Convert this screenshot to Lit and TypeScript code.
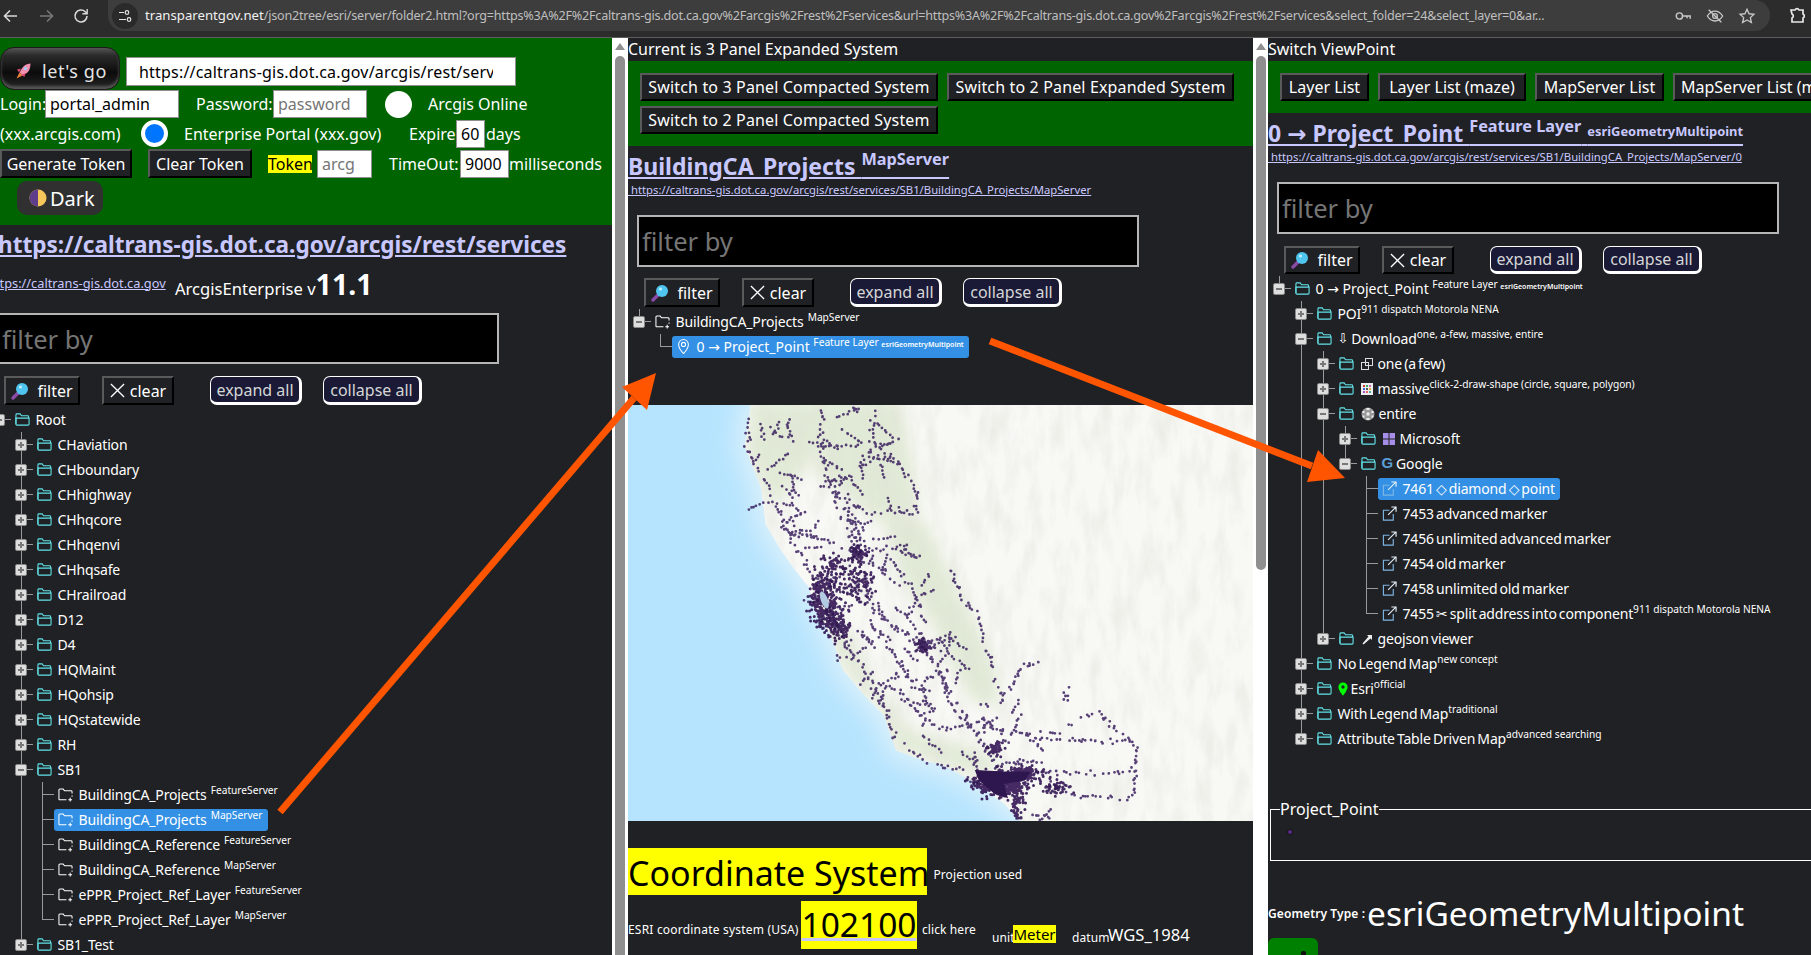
import { LitElement, html, css, svg, nothing } from "lit";
import { customElement } from "lit/decorators.js";

type N = { label: string; sup?: string; sup2?: string; pre?: string; kids?: N[]; closed?: boolean; icon?: string; sel?: boolean; wide?: boolean };

const folderIcon = svg`<svg class="ic" viewBox="0 0 16 16" fill="none" stroke="#62e4ea" stroke-width="1.15"><path d="M1 13V3a1 1 0 0 1 1-1h3.5l1.5 2h6.5a1 1 0 0 1 1 1v1.5"/><path d="M1 6.5h14V13a1 1 0 0 1-1 1H2a1 1 0 0 1-1-1z"/></svg>`;
const serverIcon = svg`<svg class="ic" viewBox="0 0 16 16" fill="none" stroke="#fff" stroke-width="1.1"><path d="M1 13.5V3.2a1 1 0 0 1 1-1h3.5L7 4h7a1 1 0 0 1 1 1v2M15 9v1.5M1 13.5h8"/><path d="M13 11.5v4M11 13.5h4"/></svg>`;
const pinIcon = svg`<svg class="ic" viewBox="0 0 16 16" fill="none" stroke="#fff" stroke-width="1.1"><path d="M8 15.5S13.2 10 13.2 5.8a5.2 5.2 0 0 0-10.4 0C2.8 10 8 15.5 8 15.5z"/><circle cx="8" cy="5.8" r="2.2"/></svg>`;
const extIcon = svg`<svg class="ic" viewBox="0 0 16 16" fill="none" stroke-width="1.2"><path stroke="#7db6e4" d="M12 8.5V15H1.5V4.5H8"/><path stroke="#e4f0fa" d="M6.5 9.5L15 1M10 1h5v5"/></svg>`;
const oneIcon = svg`<svg class="pi" viewBox="0 0 12 12" fill="none" stroke="#ddd"><rect x="4.5" y=".5" width="7" height="7"/><rect x=".5" y="4.5" width="7" height="7"/></svg>`;
const massiveIcon = svg`<svg class="pi" viewBox="0 0 12 12"><rect width="12" height="12" fill="#eee"/><g><rect x="2" y="2" width="2" height="2" fill="#c33"/><rect x="5" y="2" width="2" height="2" fill="#3a6"/><rect x="8" y="2" width="2" height="2" fill="#c6a"/><rect x="2" y="5" width="2" height="2" fill="#36c"/><rect x="5" y="5" width="2" height="2" fill="#555"/><rect x="8" y="5" width="2" height="2" fill="#da3"/><rect x="2" y="8" width="2" height="2" fill="#a5c"/><rect x="5" y="8" width="2" height="2" fill="#e66"/><rect x="8" y="8" width="2" height="2" fill="#5aa"/></g></svg>`;
const entireIcon = svg`<svg class="pi wide" viewBox="0 0 14 14"><circle cx="7" cy="7" r="6.5" fill="#999"/><g fill="#eee"><rect x="5.5" y="1" width="3" height="2"/><rect x="1.5" y="4" width="2" height="2"/><rect x="10.5" y="4" width="2" height="2"/><rect x="5.5" y="5.5" width="3" height="3"/><rect x="1.5" y="8.5" width="2" height="2"/><rect x="10.5" y="8.5" width="2" height="2"/><rect x="5.5" y="11" width="3" height="2"/></g></svg>`;
const msIcon = svg`<svg class="pi" viewBox="0 0 12 12" fill="#a68ee8"><rect width="5.5" height="5.5"/><rect x="6.5" width="5.5" height="5.5"/><rect y="6.5" width="5.5" height="5.5"/><rect x="6.5" y="6.5" width="5.5" height="5.5"/></svg>`;
const esriIcon = svg`<svg class="pin" viewBox="0 0 12 16"><path fill-rule="evenodd" fill="#0f0" d="M6 16S11.5 9.8 11.5 5.6a5.5 5.5 0 0 0-11 0C.5 9.8 6 16 6 16zM6 3.6a2 2 0 1 1 0 4 2 2 0 0 1 0-4z"/></svg>`;
const geoIcon = svg`<svg class="pi" viewBox="0 0 12 12" fill="#eee"><path d="M1.5 10.5l6-7-1.5-1.5h5v5L9.5 5.5l-7 6z"/></svg>`;
const prefix: Record<string, any> = {
  one: oneIcon, massive: massiveIcon, entire: entireIcon, ms: msIcon, esri: esriIcon, geo: geoIcon,
  g: html`<span class="gg">G</span>`, down: html`<span class="dn">⇩</span>`,
};
const loupe = svg`<svg class="loupe" viewBox="0 0 18 18"><path d="M2 16l5-5" stroke="#8a4aa8" stroke-width="3.4" stroke-linecap="round"/><circle cx="11" cy="7" r="6" fill="#4fc4ee"/><circle cx="9.5" cy="5" r="1.6" fill="#bdeeff"/></svg>`;
const xmark = svg`<svg class="xm" viewBox="0 0 16 16" stroke="#fff" stroke-width="1.4"><path d="M1 1l14 14M15 1L1 15"/></svg>`;

const sb = (label: string, sup: string, sel = false): N => ({ label, sup, icon: "server", sel });
const closed = (label: string): N => ({ label, closed: true, kids: [] });
const tree1: N[] = [{ label: "Root", kids: [
  "CHaviation", "CHboundary", "CHhighway", "CHhqcore", "CHhqenvi", "CHhqsafe", "CHrailroad", "D12", "D4", "HQMaint", "HQohsip", "HQstatewide", "RH",
].map(closed).concat([
  { label: "SB1", kids: [
    sb("BuildingCA_Projects ", "FeatureServer"), sb("BuildingCA_Projects ", "MapServer", true),
    sb("BuildingCA_Reference ", "FeatureServer"), sb("BuildingCA_Reference ", "MapServer"),
    sb("ePPR_Project_Ref_Layer ", "FeatureServer"), sb("ePPR_Project_Ref_Layer ", "MapServer"),
  ] },
  closed("SB1_Test"),
]) }];
const tree2: N[] = [{ label: "BuildingCA_Projects ", sup: "MapServer", icon: "server", kids: [
  { label: "0 → Project_Point ", sup: "Feature Layer ", sup2: "esriGeometryMultipoint", icon: "pin", sel: true, wide: true },
] }];
const ext = (label: string, sel = false, sup?: string): N => ({ label, icon: "ext", sel, sup });
const tree3: N[] = [{ label: "0 → Project_Point ", sup: "Feature Layer ", sup2: "esriGeometryMultipoint", wide: true, kids: [
  { label: "POI", sup: "911 dispatch Motorola NENA", closed: true, kids: [] },
  { label: "Download", pre: "down", sup: "one, a-few, massive, entire", kids: [
    { label: "one (a few)", pre: "one", closed: true, kids: [] },
    { label: "massive", pre: "massive", sup: "click-2-draw-shape (circle, square, polygon)", closed: true, kids: [] },
    { label: "entire", pre: "entire", kids: [
      { label: "Microsoft", pre: "ms", closed: true, kids: [] },
      { label: "Google", pre: "g", kids: [
        ext("7461 ◇ diamond ◇ point", true), ext("7453 advanced marker"), ext("7456 unlimited advanced marker"),
        ext("7454 old marker"), ext("7458 unlimited old marker"), ext("7455 ✂ split address into component", false, "911 dispatch Motorola NENA"),
      ] },
    ] },
    { label: "geojson viewer", pre: "geo", closed: true, kids: [] },
  ] },
  { label: "No Legend Map", sup: "new concept", closed: true, kids: [] },
  { label: "Esri", pre: "esri", sup: "official", closed: true, kids: [] },
  { label: "With Legend Map", sup: "traditional", closed: true, kids: [] },
  { label: "Attribute Table Driven Map", sup: "advanced searching", closed: true, kids: [] },
] }];

/* ---- map: coordinates were read off the reference, then mapped to the map's own box ---- */
const mx = (x: number) => x / 2.412 - 18;
const my = (y: number) => y / 2.825 - 5;
const pts = (a: number[][]) => a.map(([x, y]) => `${mx(x).toFixed(1)},${my(y).toFixed(1)}`).join(" ");
const coast = [[340, 0], [335, 60], [325, 130], [345, 190], [365, 250], [375, 350], [410, 420], [440, 470], [480, 530], [490, 580], [530, 660], [550, 720], [560, 760], [610, 830], [660, 890], [690, 990], [760, 1020], [800, 1030], [880, 1080], [950, 1140], [990, 1190]];
const land = [...coast, [1560, 1190], [1560, 0]];
const east = [[0, 640], [350, 700], [500, 790], [700, 860], [850, 950], [1000, 1070], [1190, 1110]];
const lerpAt = (t: number[][], y: number, yi: number, xi: number) => {
  for (let i = 0; i + 1 < t.length; i++) {
    if (y >= t[i][yi] && y <= t[i + 1][yi]) {
      const k = (y - t[i][yi]) / (t[i + 1][yi] - t[i][yi] || 1);
      return t[i][xi] + (t[i + 1][xi] - t[i][xi]) * k;
    }
  }
  return t[t.length - 1][xi];
};
const greens = [
  [[340, 0], [700, 0], [735, 200], [745, 320], [640, 340], [560, 260], [490, 200], [520, 120], [480, 180], [400, 300], [370, 260], [325, 130]],
  [[650, 300], [760, 340], [820, 490], [880, 620], [930, 760], [940, 870], [870, 850], [790, 660], [700, 500]],
  [[470, 530], [560, 640], [640, 800], [720, 930], [900, 990], [960, 1060], [850, 1050], [760, 1015], [690, 985], [650, 880], [560, 750], [500, 600]],
];
const roads: number[][][] = [
  [[510, 20], [510, 120], [520, 210], [540, 260], [580, 330], [600, 430], [620, 540], [680, 640], [750, 690], [820, 820], [880, 940], [920, 1010], [930, 1060]],
  [[335, 60], [330, 140], [370, 220], [400, 300], [430, 380], [470, 450], [500, 540], [540, 620], [570, 690], [610, 760], [660, 860], [690, 960], [760, 1020], [860, 1050]],
  [[640, 30], [630, 120], [690, 170], [740, 260], [740, 320], [640, 320], [580, 400]],
  [[380, 60], [400, 100], [500, 130], [600, 130], [680, 170]],
  [[600, 430], [720, 410]], [[600, 430], [480, 380], [420, 340]], [[600, 430], [660, 480], [700, 530]], [[600, 430], [520, 530]],
  [[530, 260], [570, 270], [580, 400]],
  [[610, 540], [640, 600], [700, 650], [760, 700], [800, 780], [830, 880], [870, 920], [915, 1000]],
  [[820, 480], [850, 560], [890, 610], [900, 680], [935, 800], [945, 850], [1000, 750], [1040, 740]],
  [[1100, 800], [1100, 860]],
  [[870, 920], [980, 940], [1080, 940], [1170, 880], [1240, 950], [1270, 980], [1265, 1050], [1265, 1130]],
  [[1020, 955], [1200, 965], [1260, 960]], [[1020, 1050], [1130, 1055], [1260, 1050]], [[1060, 1080], [1110, 1115], [1260, 1125]],
  [[550, 720], [580, 670]], [[700, 830], [760, 900], [800, 930], [870, 920]], [[680, 770], [740, 800], [830, 760]], [[640, 650], [720, 770]],
  [[680, 450], [740, 560], [760, 640]], [[740, 560], [720, 620], [800, 720]],
];
const clusters = [
  [515, 570, 24, 52, 300], [548, 635, 22, 28, 110], [600, 432, 14, 14, 60], [755, 695, 12, 14, 50], [600, 520, 28, 42, 90], [540, 470, 30, 30, 60],
  [945, 1085, 44, 28, 380], [1000, 1055, 28, 16, 110], [930, 985, 14, 14, 50], [985, 1150, 14, 28, 50], [1075, 1095, 26, 18, 45],
];
let seed = 7;
const rnd = () => { seed = (seed * 16807) % 2147483647; return seed / 2147483647; };
const gauss = () => (rnd() + rnd() + rnd() + rnd() - 2) * 1.2;
const buildDots = () => {
  let small = "", big = "";
  const dot = (x: number, y: number) => `M${mx(x).toFixed(1)} ${my(y).toFixed(1)}h0`;
  for (const r of roads) {
    for (let i = 0; i + 1 < r.length; i++) {
      const [ax, ay] = r[i], [bx, by] = r[i + 1];
      const n = Math.ceil(Math.hypot(bx - ax, by - ay) / 8);
      for (let k = 0; k < n; k++) {
        if (rnd() < 0.22) continue;
        const t = k / n;
        small += dot(ax + (bx - ax) * t + gauss() * 5, ay + (by - ay) * t + gauss() * 5);
      }
    }
  }
  /* the mesh of local roads between the highways */
  for (let s = 0; s < 110; s++) {
    const y = rnd() * 1180;
    const w0 = lerpAt(coast, y, 1, 0), w1 = lerpAt(east, y, 0, 1);
    let x = w0 + 8 + rnd() * Math.max(10, w1 - w0 - 8);
    let yy = y;
    const ang = rnd() * 6.28, len = 3 + Math.floor(rnd() * 6);
    for (let k = 0; k < len; k++) {
      x += Math.cos(ang) * 9; yy += Math.sin(ang) * 9;
      small += dot(x + gauss() * 3, yy + gauss() * 3);
    }
  }
  for (const [cx, cy, sx, sy, n] of clusters) {
    for (let k = 0; k < n; k++) big += dot(cx + gauss() * sx, cy + gauss() * sy);
  }
  return { small, big };
};
const dots = buildDots();

const mapSvg = svg`<svg class="map" viewBox="0 0 625 416" preserveAspectRatio="none">
  <defs>
    <filter id="b6"><feGaussianBlur stdDeviation="8"/></filter>
    <filter id="b14"><feGaussianBlur stdDeviation="14"/></filter>
    <filter id="soft"><feGaussianBlur stdDeviation=".45"/></filter>
    <filter id="hill" x="0" y="0" width="100%" height="100%">
      <feTurbulence type="fractalNoise" baseFrequency="0.07 0.022" numOctaves="4" seed="11"/>
      <feColorMatrix type="matrix" values="0 0 0 0 .74  0 0 0 0 .76  0 0 0 0 .68  1.9 0 0 0 -.8"/>
    </filter>
    <clipPath id="landclip"><polygon points=${pts(land)}/></clipPath>
  </defs>
  <rect width="625" height="416" fill="#b6e4fe"/>
  <polygon points=${pts(land)} fill="#dff2fb" stroke="#dff2fb" stroke-width="16" filter="url(#b14)"/>
  <ellipse cx="603" cy="12" rx="22" ry="22" fill="#c4e8f8"/>
  <g clip-path="url(#landclip)">
    <rect width="625" height="416" fill="#f8f8f5"/>
    ${greens.map((g) => svg`<polygon points=${pts(g)} fill="#e1ead6" filter="url(#b6)"/>`)}
    <rect x="105" width="520" height="416" filter="url(#hill)" opacity=".55"/>
  </g>
  <g filter="url(#soft)">
    <path d=${dots.small} stroke="#33185a" stroke-opacity=".82" stroke-width="2.8" stroke-linecap="round" fill="none"/>
    <path d=${dots.big} stroke="#2e1350" stroke-opacity=".88" stroke-width="3" stroke-linecap="round" fill="none"/>
    <polygon points=${pts([[880, 1045], [960, 1050], [1015, 1050], [1000, 1075], [950, 1085], [960, 1125], [925, 1110], [890, 1075]])} fill="#2e1350"/>
  </g>
  <ellipse cx=${mx(517)} cy=${my(565)} rx="3.5" ry="9" fill="#c7e9fa" opacity=".85" transform="rotate(-20 ${mx(517)} ${my(565)})"/>
</svg>`;

@customElement("app-root")
export class AppRoot extends LitElement {
  static styles = css`
    :host { display: block; position: relative; width: 1811px; height: 955px; overflow: hidden; background: #202124; color: #fff; font-family: "Noto Sans", "DejaVu Sans", sans-serif; font-size: 16px; }
    * { box-sizing: border-box; }

    /* browser chrome */
    .chrome { height: 38px; background: #2c2c2c; border-bottom: 1px solid #5d5d5d; display: flex; align-items: flex-start; position: relative; }
    .navs { width: 108px; height: 31px; flex: none; display: flex; align-items: center; padding-left: 1px; gap: 15px; }
    .navs svg { width: 20px; height: 20px; flex: none; }
    .omni { width: 1662px; height: 31px; background: #3d3d3d; border-radius: 0 16px 16px 16px; display: flex; align-items: center; flex: none; position: relative; }
    .tune { width: 26px; height: 26px; margin-left: 4px; border-radius: 50%; background: #2a2a2a; display: flex; align-items: center; justify-content: center; flex: none; }
    .tune svg { width: 14px; height: 14px; }
    .url { margin-left: 7px; width: 1515px; font: 12.6px/31px "Noto Sans", sans-serif; color: #bfbfbf; white-space: nowrap; overflow: hidden; flex: none; letter-spacing: -.23px; }
    .url b { font-weight: 400; color: #f1f1f1; font-size: 13.2px; letter-spacing: 0; }
    .omni svg.o { width: 18px; height: 18px; flex: none; margin-left: 14px; }
    .ext-btn { width: 20px; height: 20px; margin: 5px 0 0 17px; flex: none; }

    .main { display: flex; height: 917px; }
    .p1 { width: 612px; flex: none; overflow: hidden; }
    .p2 { width: 625px; flex: none; overflow: hidden; }
    .p3 { flex: 1; min-width: 0; overflow: hidden; white-space: nowrap; }
    .track { flex: none; background: #fff; display: flex; flex-direction: column; align-items: center; height: 100%; }
    .t1 { width: 16px; }
    .t2 { width: 15px; }
    .up { width: 0; height: 0; margin-top: 5px; border: 5px solid transparent; border-top: 0; border-bottom: 7px solid #8f8f8f; }
    .thumb { width: 10px; background: #8f8f8f; border-radius: 5px; margin-top: 6px; }
    .t1 .thumb { flex: 1; border-radius: 5px 5px 0 0; margin-bottom: -8px; }
    .t2 .thumb { height: 514px; }

    /* left green header */
    .green { background: #006400; }
    .hdr { height: 187px; padding-top: 9px; }
    .row { display: flex; align-items: center; white-space: nowrap; }
    .r1 { height: 43px; }
    .r2 { height: 28px; margin-top: 0; }
    .r3 { height: 29px; margin-top: 1px; }
    .r4 { height: 29px; margin-top: 1px; }
    .r5 { height: 34px; margin-top: 3px; padding-left: 17px; }
    .go { width: 120px; height: 43px; border-radius: 14px; border: 1px solid #1b1b1b; background: linear-gradient(#555 0, #2b2b2b 18%, #0b0b0b 60%, #262626 100%); color: #e4e4e4; font: 18px "Noto Sans", sans-serif; letter-spacing: .55px; display: flex; align-items: center; padding: 4px 0 0 13px; gap: 10px; box-shadow: inset 0 -3px 3px #555; flex: none; }
    .go svg { width: 18px; height: 18px; flex: none; }
    .field { height: 28px; border: 1px solid #8f8f8f; background: #fff; color: #000; font: 16px "Noto Sans", sans-serif; padding: 0 4px; outline: none; flex: none; margin: 0; }
    .field::placeholder { color: #757575; }
    .f-url { width: 390px; height: 29px; margin: 6px 0 0 6px; padding: 0 22px 0 12px; letter-spacing: .2px; }
    .f-login { width: 134px; }
    .f-pass { width: 94px; }
    .f-exp { width: 29px; }
    .f-tok { width: 55px; }
    .f-time { width: 49px; }
    .lb-login { width: 45px; }
    .lb-pass { width: 77px; margin-left: 17px; }
    .radio { width: 27px; height: 27px; border-radius: 50%; background: #fff; flex: none; }
    .rd1 { margin: 0 16px 0 18px; }
    .rd2 { margin: 0 16px 0 17px; border: 4px solid #fff; background: #0075ff; }
    .lb-x { width: 124px; }
    .lb-ent { width: 225px; }
    .lb-exp { width: 47px; }
    .lb-days { margin-left: 1px; }
    .btn { height: 29px; background: #202124; color: #fff; border: 2px solid; border-color: #5a5a5a #000 #000 #5a5a5a; font: 16px "Noto Sans", sans-serif; padding: 0 6px; display: inline-flex; align-items: center; justify-content: center; flex: none; white-space: nowrap; }
    .b-gen { width: 132px; }
    .b-clr { width: 104px; margin-left: 16px; }
    .tok { background: #ff0; color: #000; height: 18px; width: 44px; line-height: 18px; margin: 0 5px 0 16px; display: block; flex: none; text-align: center; }
    .lb-time { width: 71px; margin-left: 17px; }
    .dark { width: 86px; height: 34px; border-radius: 10px; background: #303030; display: flex; align-items: center; padding-left: 12px; gap: 3px; font-size: 20px; }
    .dark svg { width: 18px; height: 18px; }

    /* heading blocks */
    .h { color: #c8c8ff; text-decoration: underline; font-weight: 700; white-space: nowrap; display: block; }
    .h1 { font-size: 22.55px; height: 40px; line-height: 40px; margin-left: -2px; }
    .small { color: #c8c8ff; text-decoration: underline; font-size: 11.3px; white-space: nowrap; }
    .s1 { margin-left: -13px; width: 188px; flex: none; margin-top: -3px; font-size: 12.8px; }
    .ver { height: 38px; display: flex; align-items: center; }
    .arcgis { font-size: 16.6px; padding-top: 6px; white-space: nowrap; }
    .arcgis b { font-size: 28.5px; line-height: 20px; }
    .filter { display: block; height: 51px; background: #000; border: 2px solid #b5b5b5; color: #fff; font: 25.5px "Noto Sans", sans-serif; padding: 0 3px; outline: none; }
    .filter::placeholder { color: #757575; }
    .fl1 { width: 503px; margin: 10px 0 12px -4px; padding-left: 4px; }
    .fl2 { width: 502px; margin: 0 0 11px 9px; height: 52px; }
    .fl3 { width: 502px; margin: 0 0 12px 9px; height: 52px; }
    .tools { display: flex; align-items: center; height: 29px; white-space: nowrap; }
    .tb1 { padding-left: 4px; }
    .tb2 { padding-left: 16px; }
    .tb3 { padding-left: 16px; height: 28px; }
    .tools .btn { gap: 8px; height: 100%; }
    .b-f { width: 76px; }
    .b-c { width: 72px; gap: 5px !important; margin-left: 22px; }
    .pill { height: 100%; background: #1a1a36; color: #d6d6d6; border: 1px solid #fff; border-width: 1px 3px 3px 1px; border-radius: 7px; font: 16px "Noto Sans", sans-serif; display: inline-flex; align-items: center; justify-content: center; flex: none; padding: 0; }
    .p-e { width: 92px; margin-left: 36px; }
    .p-o { width: 99px; margin-left: 21px; }
    .loupe { width: 18px; height: 18px; flex: none; }
    .xm { width: 15px; height: 15px; flex: none; }

    .title { height: 23px; line-height: 23px; font-size: 16px; white-space: nowrap; }
    .sw { display: flex; flex-wrap: wrap; gap: 4px 9px; padding: 12px 12px; height: 85px; }
    .sw .btn { width: 298px; height: 28px; letter-spacing: .15px; }
    .sw .b2 { width: 287px; }
    .vp { height: 52px; padding: 12px; display: flex; gap: 9px; }
    .vp .btn { height: 28px; }
    .vp1 { width: 89px; }
    .vp2 { width: 148px; }
    .vp3 { width: 129px; }
    .vp4 { width: 160px; justify-content: flex-start !important; padding-left: 6px !important; }

    .h2 { font-size: 23px; height: 32px; line-height: 38px; display: inline-block; }
    .h2 sup { font-size: 16.3px; line-height: 0; vertical-align: 10px; }
    .h2 sub { font-size: 12.9px; line-height: 0; vertical-align: 6px; }
    .link2 { display: block; height: 16px; line-height: 16px; margin-top: 2px; }
    .p2 .head { height: 69px; padding-top: 1px; }
    .p3 .head { height: 69px; padding-top: 1px; }

    /* tree */
    ul { list-style: none; margin: 0; padding: 0 0 0 22px; }
    ul.root { padding-left: 5px; margin-top: 2px; }
    ul.root.lf { padding-left: 0; margin-left: -7px; }
    li { background: linear-gradient(#9a9a9a, #9a9a9a) no-repeat 5.5px 0 / 1px 100%; }
    li.last { background-size: 1px 12.5px; }
    li.leaf { background-position: 5px 0; }
    .n { height: 25px; display: flex; align-items: center; white-space: nowrap; font-size: 14px; word-spacing: -1.4px; letter-spacing: -.15px; }
    .tx.wd { word-spacing: 0; letter-spacing: 0; }
    .tx.srv sup { margin-left: 2px; }
    .tg { width: 12px; height: 12px; flex: none; border-radius: 2px; border: 1px solid #8a8a8a; background-color: #dedede; background-repeat: no-repeat; background-position: center, center; background-image: linear-gradient(#777, #777), linear-gradient(#777, #777); background-size: 6px 2px, 2px 6px; }
    .tg.open { background-size: 6px 2px, 0 0; }
    .dash { width: 6px; height: 1px; background: #9a9a9a; flex: none; margin-right: 3.5px; }
    .ic { width: 15px; height: 15px; flex: none; }
    .n > .ic { margin-right: 6px; }
    .pi { width: 12px; height: 12px; flex: none; margin: 0 5px 0 1px; }
    .pi.wide { width: 14px; height: 14px; margin-right: 4px; }
    .pin { width: 10px; height: 14px; flex: none; margin-right: 3px; }
    .gg { color: #5b9fd8; font-weight: 700; font-size: 15px; margin: -3px 3px 0 0; font-family: "Liberation Sans", sans-serif; }
    .dn { margin-right: 3px; font: 13px "DejaVu Sans", sans-serif; }
    .tx sup { font-size: 10.2px; line-height: 0; vertical-align: 6px; word-spacing: 0; letter-spacing: 0; }
    .tx sub { font-size: 7px; line-height: 0; vertical-align: 5px; font-weight: 600; word-spacing: 0; letter-spacing: 0; }
    .lconn { width: 11.5px; height: 1px; background: #9a9a9a; margin-left: 5px; flex: none; }
    .a { height: 22px; display: inline-flex; align-items: center; padding: 0 5px 0 4px; border-radius: 3px; gap: 6px; }
    .a.sel { background: #3390e4; }

    .mapbox { margin-top: 46px; }
    .map { display: block; width: 625px; height: 416px; }
    .cs { padding-top: 26px; white-space: nowrap; }
    .y { background: #ff0; color: #000; }
    .csr1 { display: flex; align-items: center; height: 48px; }
    .csr1 .y { font-size: 34px; line-height: 50px; height: 47px; display: block; width: 299px; }
    .csr1 .mini { padding-top: 7px; }
    .mini { font-size: 12px; letter-spacing: .1px; }
    .csr2 { display: flex; height: 48px; margin-top: 6px; }
    .m-esri { width: 173px; flex: none; letter-spacing: .2px; }
    .code { font-size: 33.5px; line-height: 47px; height: 48px; width: 116px; text-align: center; flex: none; }
    .code u { text-decoration-color: #c8c8ff; text-decoration-thickness: 3px; text-underline-offset: 1px; }
    .csr2 .mini { padding-top: 20px; }
    .ck { margin-left: 5px; width: 70px; flex: none; }
    .unit { margin-top: 28px; width: 21px; flex: none; padding-top: 0 !important; }
    .mtr { height: 18px; line-height: 18px; width: 43px; text-align: center; margin-top: 24px; flex: none; font-size: 15px; }
    .dat { margin: 28px 0 0 16px; width: 36px; flex: none; padding-top: 0 !important; }
    .wgs { margin-top: 22px; font-size: 16.6px; }

    .fs { margin: 50px 0 0 2px; border: 1px solid #fff; height: 60px; padding: 0; width: 620px; }
    .fs legend { margin-left: 9px; padding: 0; font-size: 16px; line-height: 16px; }
    .dot { display: block; width: 6px; height: 6px; border-radius: 50%; background: #5b2a8c; border: 1px solid #111; margin: 12px 0 0 16px; }
    .gt { display: flex; align-items: center; height: 50px; margin-top: 27px; white-space: nowrap; }
    .gt .mini { font-weight: 600; width: 99px; flex: none; font-size: 12px; }
    .gt .big { font-size: 33.5px; }
    .gbtn { width: 50px; height: 30px; background: #008000; border-radius: 6px 6px 0 0; padding: 13px 0 0 33px; }
    .gbtn span { display: block; width: 5px; height: 6px; background: #111; border-radius: 2px 2px 0 0; }

    .arrows { position: absolute; inset: 0; width: 1811px; height: 955px; pointer-events: none; }
  `;

  private row(n: N, last: boolean): unknown {
    const hasKids = !!n.kids;
    const isLeaf = !hasKids;
    const label = html`<span class="tx ${n.wide ? "wd" : ""} ${n.icon === "server" ? "srv" : ""}">${n.label}${n.sup ? html`<sup>${n.sup}</sup>` : nothing}${n.sup2 ? html`<sub>${n.sup2}</sub>` : nothing}</span>`;
    const ic = n.icon === "server" ? serverIcon : n.icon === "pin" ? pinIcon : n.icon === "ext" ? extIcon : null;
    return html`<li class="${last ? "last" : ""} ${isLeaf ? "leaf" : ""}">
      <div class="n">
        ${isLeaf
          ? html`<span class="lconn"></span><span class="a ${n.sel ? "sel" : ""}">${ic}${label}</span>`
          : html`<span class="tg ${n.closed ? "" : "open"}"></span><span class="dash"></span>${ic ?? folderIcon}${n.pre ? prefix[n.pre] : nothing}${label}`}
      </div>
      ${hasKids && !n.closed && n.kids!.length ? html`<ul>${n.kids!.map((k, i) => this.row(k, i === n.kids!.length - 1))}</ul>` : nothing}
    </li>`;
  }

  private tools(cls: string) {
    return html`<div class="tools ${cls}">
      <button class="btn b-f">${loupe}filter</button>
      <button class="btn b-c">${xmark}clear</button>
      <button class="pill p-e">expand all</button>
      <button class="pill p-o">collapse all</button>
    </div>`;
  }

  render() {
    return html`
      <div class="chrome">
        <div class="navs">
          <svg viewBox="0 0 20 20" fill="none" stroke="#d8d8d8" stroke-width="1.6"><path d="M16 10H4M9 4.5L3.5 10 9 15.5"/></svg>
          <svg viewBox="0 0 20 20" fill="none" stroke="#777" stroke-width="1.6"><path d="M4 10h12M11 4.5l5.5 5.5-5.5 5.5"/></svg>
          <svg viewBox="0 0 20 20" fill="none" stroke="#d8d8d8" stroke-width="1.6"><path d="M16 10a6 6 0 1 1-1.8-4.3L16 7.5"/><path d="M16.2 3v4.8h-4.8" stroke-width="1.4"/></svg>
        </div>
        <div class="omni">
          <span class="tune"><svg viewBox="0 0 14 14" fill="none" stroke="#e6e6e6" stroke-width="1.2"><path d="M1 3.5h5M1 10.5h7"/><circle cx="9" cy="3.5" r="1.8"/><circle cx="11" cy="10.5" r="1.8"/></svg></span>
          <span class="url"><b>transparentgov.net</b>/json2tree/esri/server/folder2.html?org=https%3A%2F%2Fcaltrans-gis.dot.ca.gov%2Farcgis%2Frest%2Fservices&amp;url=https%3A%2F%2Fcaltrans-gis.dot.ca.gov%2Farcgis%2Frest%2Fservices&amp;select_folder=24&amp;select_layer=0&amp;ar...</span>
          <svg class="o" viewBox="0 0 20 20" fill="none" stroke="#c8c8c8" stroke-width="1.6"><circle cx="6" cy="10" r="3.5"/><path d="M9.5 10H18v3M14.5 10v2.5"/></svg>
          <svg class="o" viewBox="0 0 20 20" fill="none" stroke="#c8c8c8" stroke-width="1.5"><path d="M1.5 10S5 4.5 10 4.5 18.5 10 18.5 10 15 15.5 10 15.5 1.5 10 1.5 10z"/><circle cx="10" cy="10" r="2.6"/><path d="M3 3l14 14"/></svg>
          <svg class="o" viewBox="0 0 20 20" fill="none" stroke="#c8c8c8" stroke-width="1.5"><path d="M10 2.5l2.3 5 5.4.6-4 3.7 1.1 5.4L10 14.4l-4.8 2.8 1.1-5.4-4-3.7 5.4-.6z"/></svg>
        </div>
        <svg class="ext-btn" viewBox="0 0 20 20" fill="none" stroke="#e8e8e8" stroke-width="1.7"><path d="M4 5h4a2.2 2.2 0 0 1 4 0h4v4a2.2 2.2 0 0 1 0 4v4H5v-4a2.2 2.2 0 0 0 0-4z"/></svg>
      </div>

      <div class="main">
        <section class="p1">
          <div class="green hdr">
            <div class="row r1">
              <div class="go">
                <svg viewBox="0 0 18 18"><path d="M16.5 1.5c-4 .3-7 2.2-9 5.5l-2 3.5 3 3 3.5-2c3.3-2 4.3-5.5 4.5-10z" fill="#f28fae"/><circle cx="11.5" cy="6.5" r="1.7" fill="#9fc8f0"/><path d="M5.5 10.5l-3 6 6-3z" fill="#f0813a"/><path d="M7 6.5L3 7.5l2 3zM11.5 11l-1 4-3-2z" fill="#d9486e"/></svg>
                <span>let's go</span>
              </div>
              <input class="field f-url" .value=${"https://caltrans-gis.dot.ca.gov/arcgis/rest/services"} />
            </div>
            <div class="row r2">
              <span class="lb-login">Login:</span><input class="field f-login" .value=${"portal_admin"} />
              <span class="lb-pass">Password:</span><input class="field f-pass" placeholder="password" />
              <span class="radio rd1"></span><span>Arcgis Online</span>
            </div>
            <div class="row r3">
              <span class="lb-x">(xxx.arcgis.com)</span>
              <span class="radio rd2"></span>
              <span class="lb-ent">Enterprise Portal (xxx.gov)</span>
              <span class="lb-exp">Expire</span><input class="field f-exp" .value=${"60"} /><span class="lb-days">days</span>
            </div>
            <div class="row r4">
              <button class="btn b-gen">Generate Token</button>
              <button class="btn b-clr">Clear Token</button>
              <span class="tok">Token</span><input class="field f-tok" placeholder="arcg" />
              <span class="lb-time">TimeOut:</span><input class="field f-time" .value=${"9000"} /><span>milliseconds</span>
            </div>
            <div class="row r5">
              <div class="dark">
                <svg viewBox="0 0 18 18"><circle cx="9" cy="9" r="8.5" fill="#f6c65b"/><path d="M9 .5a8.5 8.5 0 0 0 0 17z" fill="#5e3d8a"/></svg>
                <span>Dark</span>
              </div>
            </div>
          </div>
          <a class="h h1">https://caltrans-gis.dot.ca.gov/arcgis/rest/services</a>
          <div class="ver">
            <a class="small s1">https://caltrans-gis.dot.ca.gov</a>
            <span class="arcgis">ArcgisEnterprise v<b>11.1</b></span>
          </div>
          <input class="filter fl1" placeholder="filter by" />
          ${this.tools("tb1")}
          <ul class="root lf">${tree1.map((n) => this.row(n, true))}</ul>
        </section>

        <div class="track t1"><span class="up"></span><span class="thumb"></span></div>

        <section class="p2">
          <div class="title">Current is 3 Panel Expanded System</div>
          <div class="green sw">
            <button class="btn">Switch to 3 Panel Compacted System</button>
            <button class="btn b2">Switch to 2 Panel Expanded System</button>
            <button class="btn">Switch to 2 Panel Compacted System</button>
          </div>
          <div class="head">
            <a class="h h2">BuildingCA_Projects <sup>MapServer</sup></a>
            <a class="small link2">&nbsp;https://caltrans-gis.dot.ca.gov/arcgis/rest/services/SB1/BuildingCA_Projects/MapServer</a>
          </div>
          <input class="filter fl2" placeholder="filter by" />
          ${this.tools("tb2")}
          <ul class="root">${tree2.map((n) => this.row(n, true))}</ul>
          <div class="mapbox">${mapSvg}</div>
          <div class="cs">
            <div class="csr1"><span class="y">Coordinate System</span><span class="mini">&nbsp;&nbsp;Projection used</span></div>
            <div class="csr2">
              <span class="mini m-esri">ESRI coordinate system (USA)</span>
              <span class="y code"><u>102100</u></span>
              <span class="mini ck">click here</span>
              <span class="mini unit">unit</span><span class="y mtr">Meter</span>
              <span class="mini dat">datum</span><span class="wgs">WGS_1984</span>
            </div>
          </div>
        </section>

        <div class="track t2"><span class="up"></span><span class="thumb"></span></div>

        <section class="p3">
          <div class="title">Switch ViewPoint</div>
          <div class="green vp">
            <button class="btn vp1">Layer List</button>
            <button class="btn vp2">Layer List (maze)</button>
            <button class="btn vp3">MapServer List</button>
            <button class="btn vp4">MapServer List (maze)</button>
          </div>
          <div class="head">
            <a class="h h2">0 → Project_Point <sup>Feature Layer</sup> <sub>esriGeometryMultipoint</sub></a>
            <a class="small link2">&nbsp;https://caltrans-gis.dot.ca.gov/arcgis/rest/services/SB1/BuildingCA_Projects/MapServer/0</a>
          </div>
          <input class="filter fl3" placeholder="filter by" />
          ${this.tools("tb3")}
          <ul class="root">${tree3.map((n) => this.row(n, true))}</ul>
          <fieldset class="fs"><legend>Project_Point</legend><span class="dot"></span></fieldset>
          <div class="gt"><span class="mini">Geometry Type :</span><span class="big">esriGeometryMultipoint</span></div>
          <div class="gbtn"><span></span></div>
        </section>
      </div>

      <svg class="arrows" viewBox="0 0 1811 955">
        <g fill="#ff5500" stroke="none">
          <path d="M280 812L634 398" stroke="#ff5500" stroke-width="7"/>
          <polygon points="656,373 622,387 647,410"/>
          <path d="M990 341L1312 466" stroke="#ff5500" stroke-width="7"/>
          <polygon points="1345,478 1318,450 1307,482"/>
        </g>
      </svg>
    `;
  }
}
